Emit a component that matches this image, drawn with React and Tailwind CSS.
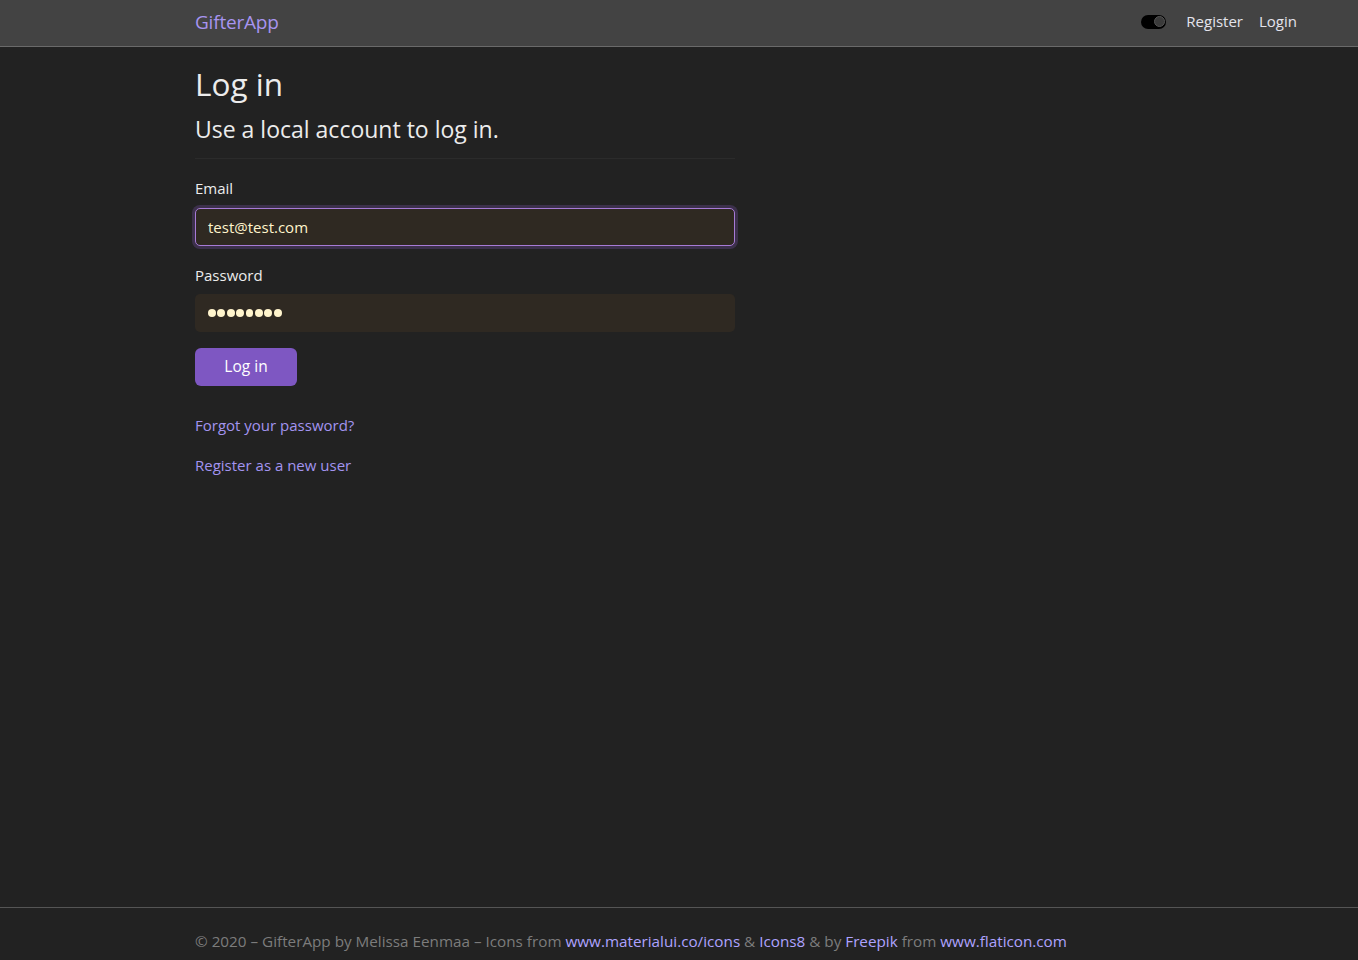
const font = { fontFamily: '"Open Sans", "Noto Sans", sans-serif' };

const Toggle = () => (
  <div className="w-[25px] h-[14px] rounded-full bg-black flex items-center justify-end pr-[1px]">
    <div className="w-[11px] h-[11px] rounded-full bg-[#3a3a3a] border border-[#555]" />
  </div>
);

const Dots = ({ n }) => (
  <div className="flex gap-[1.6px]">
    {Array.from({ length: n }).map((_, i) => (
      <span key={i} className="w-[7.8px] h-[7.8px] rounded-full bg-[#fff4cc]" />
    ))}
  </div>
);

export default function App() {
  return (
    <div className="min-h-[960px] flex flex-col bg-[#222222] text-[#e8e8e8]" style={font}>
      {/* Navbar */}
      <nav className="h-[47px] bg-[#434343] border-b border-[#6a6a6a] flex items-center">
        <div className="flex-1 flex items-center justify-between pl-[195px] pr-[61px] -mt-[3px]">
          <a className="text-[19px] text-[#a794f0] tracking-[-0.2px] mt-[1px]">GifterApp</a>
          <div className="flex items-center text-[15px] text-[#e4e4ec]">
            <Toggle />
            <a className="ml-[20px]">Register</a>
            <a className="ml-[16px]">Login</a>
          </div>
        </div>
      </nav>

      {/* Main */}
      <main className="flex-1 pl-[195px]">
        <div className="w-[540px] pt-[16px]">
          <h1 className="text-[31.5px] leading-[42px] text-[#ececec] font-normal">Log in</h1>
          <h4 className="mt-[7px] text-[23px] leading-[34px] text-[#ececec]">Use a local account to log in.</h4>
          <hr className="mt-[12px] border-t border-[#2b2b2b]" />
          <form className="mt-[20px]">
            <div>
              <label className="block text-[15px] leading-[18px] text-[#ececec]">Email</label>
              <div className="mt-[11px] h-[38px] rounded-[5px] bg-[#2f2922] border border-[#a77ad6] shadow-[0_0_0_3px_rgba(140,90,200,0.25)] flex items-center px-[12px] text-[15px] text-[#fff4cc]">
                test@test.com
              </div>
            </div>
            <div className="mt-[20px]">
              <label className="block text-[15px] leading-[18px] text-[#ececec]">Password</label>
              <div className="mt-[10px] h-[38px] rounded-[5px] bg-[#2f2922] flex items-center px-[13px]">
                <Dots n={8} />
              </div>
            </div>
            <button
              type="button"
              className="mt-[16px] h-[38px] w-[102px] rounded-[6px] bg-[#7e57c2] text-white text-[15.5px]"
            >
              Log in
            </button>
            <div className="mt-[30px] flex flex-col gap-[22px] text-[15px] leading-[18px] text-[#a394f0]">
              <a>Forgot your password?</a>
              <a>Register as a new user</a>
            </div>
          </form>
        </div>
      </main>

      {/* Footer */}
      <footer className="h-[53px] border-t border-[#555] flex items-center pl-[195px] pt-[14px] text-[15.25px] text-[#7c7c7c]">
        <span>
          © 2020 – GifterApp by Melissa Eenmaa – Icons from{" "}
          <a className="text-[#aea2ff]">www.materialui.co/icons</a> &amp;{" "}
          <a className="text-[#aea2ff]">Icons8</a> &amp; by{" "}
          <a className="text-[#aea2ff]">Freepik</a> from{" "}
          <a className="text-[#aea2ff]">www.flaticon.com</a>
        </span>
      </footer>
    </div>
  );
}
